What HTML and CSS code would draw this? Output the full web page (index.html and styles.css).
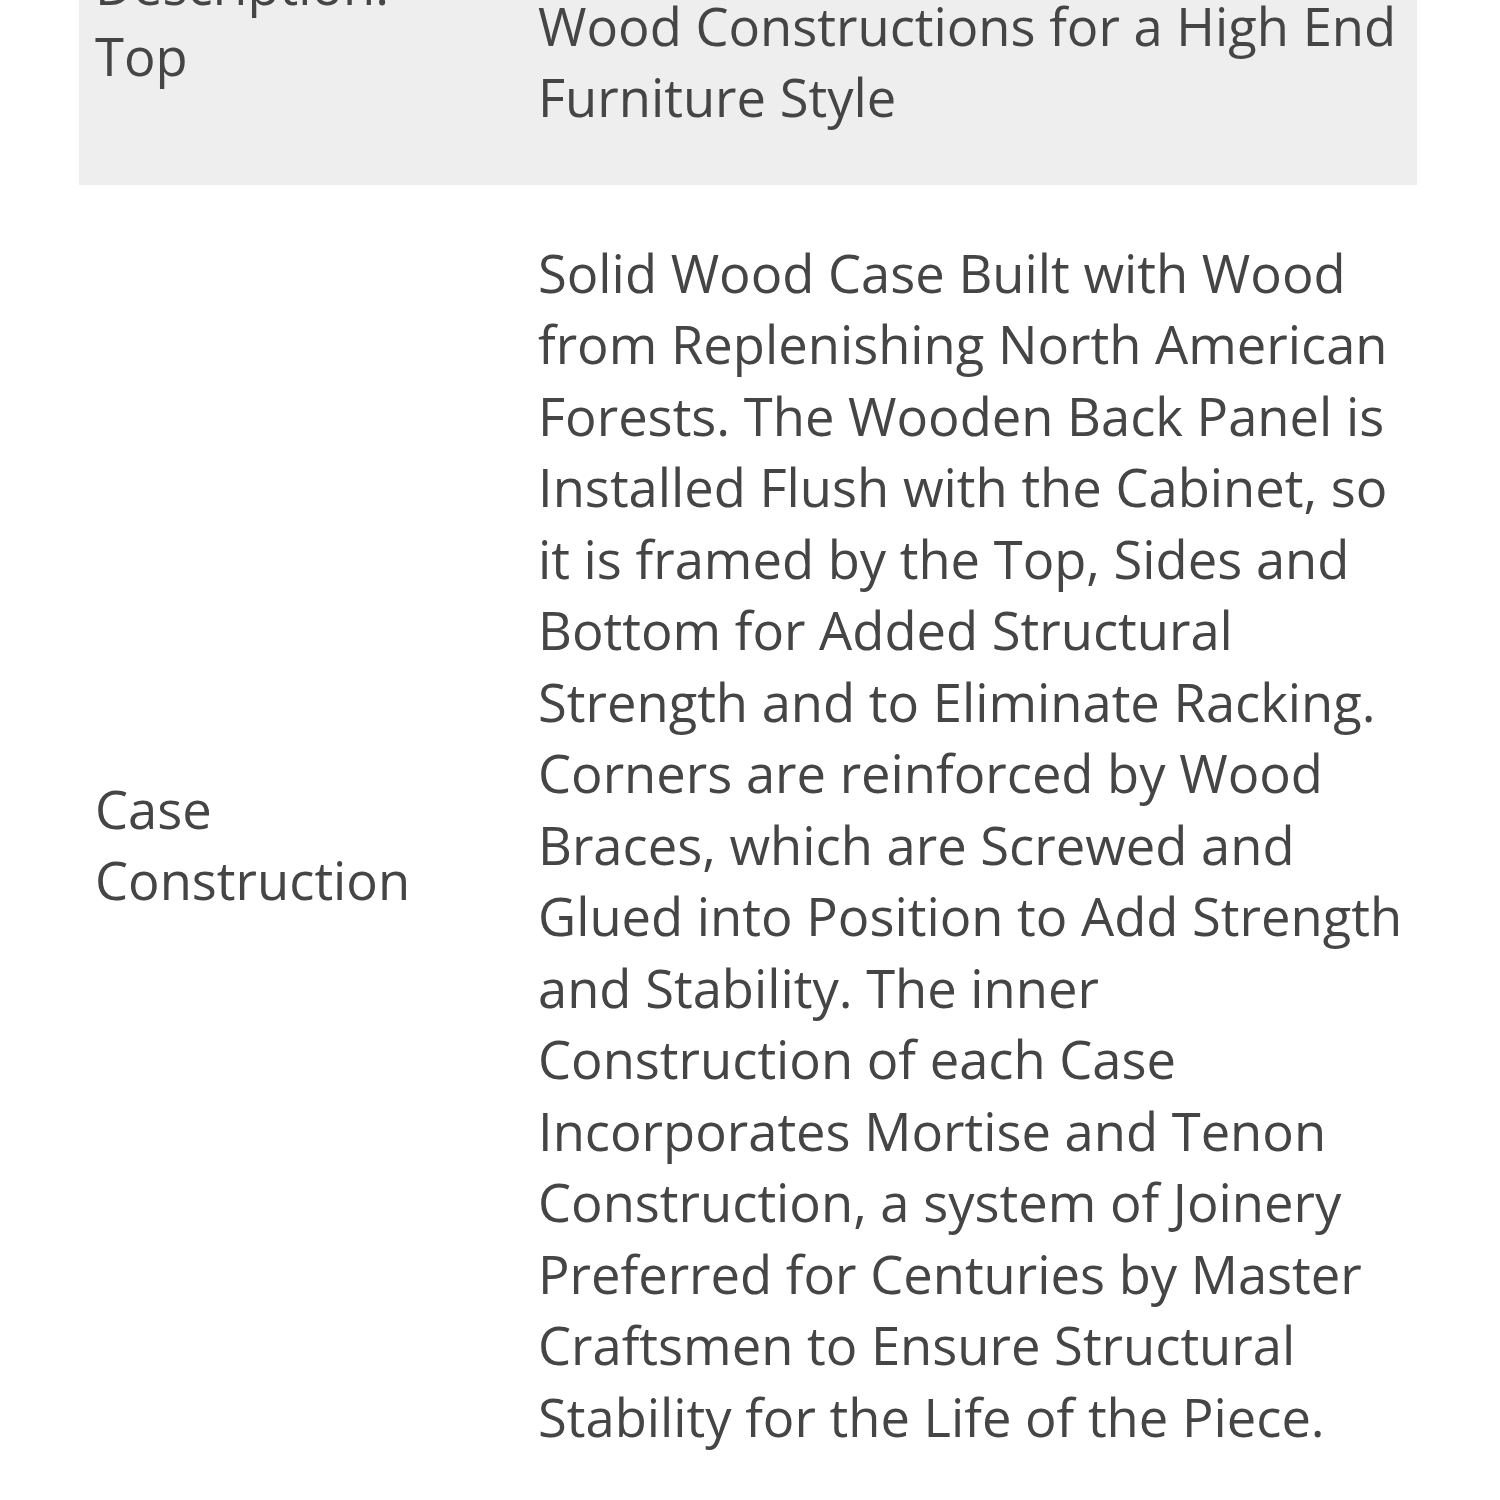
FILE: index.html
```html
<!DOCTYPE html>
<html lang="en">
<head>
<meta charset="utf-8">
<title>Specifications</title>
<link rel="stylesheet" href="styles.css">
</head>
<body>
<div class="page">
  <table class="specs">
    <tbody>
      <tr class="row row-shaded">
        <td class="label">Description: Top</td>
        <td class="value">Solid Wood Top Featuring Classic Wood Constructions for a High End Furniture Style</td>
      </tr>
      <tr class="row">
        <td class="label">Case Construction</td>
        <td class="value">Solid Wood Case Built with Wood from Replenishing North American Forests. The Wooden Back Panel is Installed Flush with the Cabinet, so it is framed by the Top, Sides and Bottom for Added Structural Strength and to Eliminate Racking. Corners are reinforced by Wood Braces, which are Screwed and Glued into Position to Add Strength and Stability. The inner Construction of each Case Incorporates Mortise and Tenon Construction, a system of Joinery Preferred for Centuries by Master Craftsmen to Ensure Structural Stability for the Life of the Piece.</td>
      </tr>
    </tbody>
  </table>
</div>
</body>
</html>
```

FILE: styles.css
```css
html, body {
  margin: 0;
  padding: 0;
  background: #ffffff;
}

.page {
  padding-left: 79px;
  width: 1338px;
  overflow: hidden;
}

.specs {
  width: 1338px;
  border-collapse: collapse;
  table-layout: fixed;
  margin-top: -134px;
  font-family: "Open Sans", "Liberation Sans", sans-serif;
  font-size: 52.5px;
  line-height: 71.5px;
  color: #454545;
}

.row-shaded {
  background: #eeeeee;
}

.label {
  width: 443px;
  padding: 52px 60px 52px 16px;
  vertical-align: middle;
  box-sizing: border-box;
}

.row-shaded .label {
  padding-bottom: 62px;
}

.value {
  padding: 52px 0 52px 16px;
  vertical-align: middle;
}
```
